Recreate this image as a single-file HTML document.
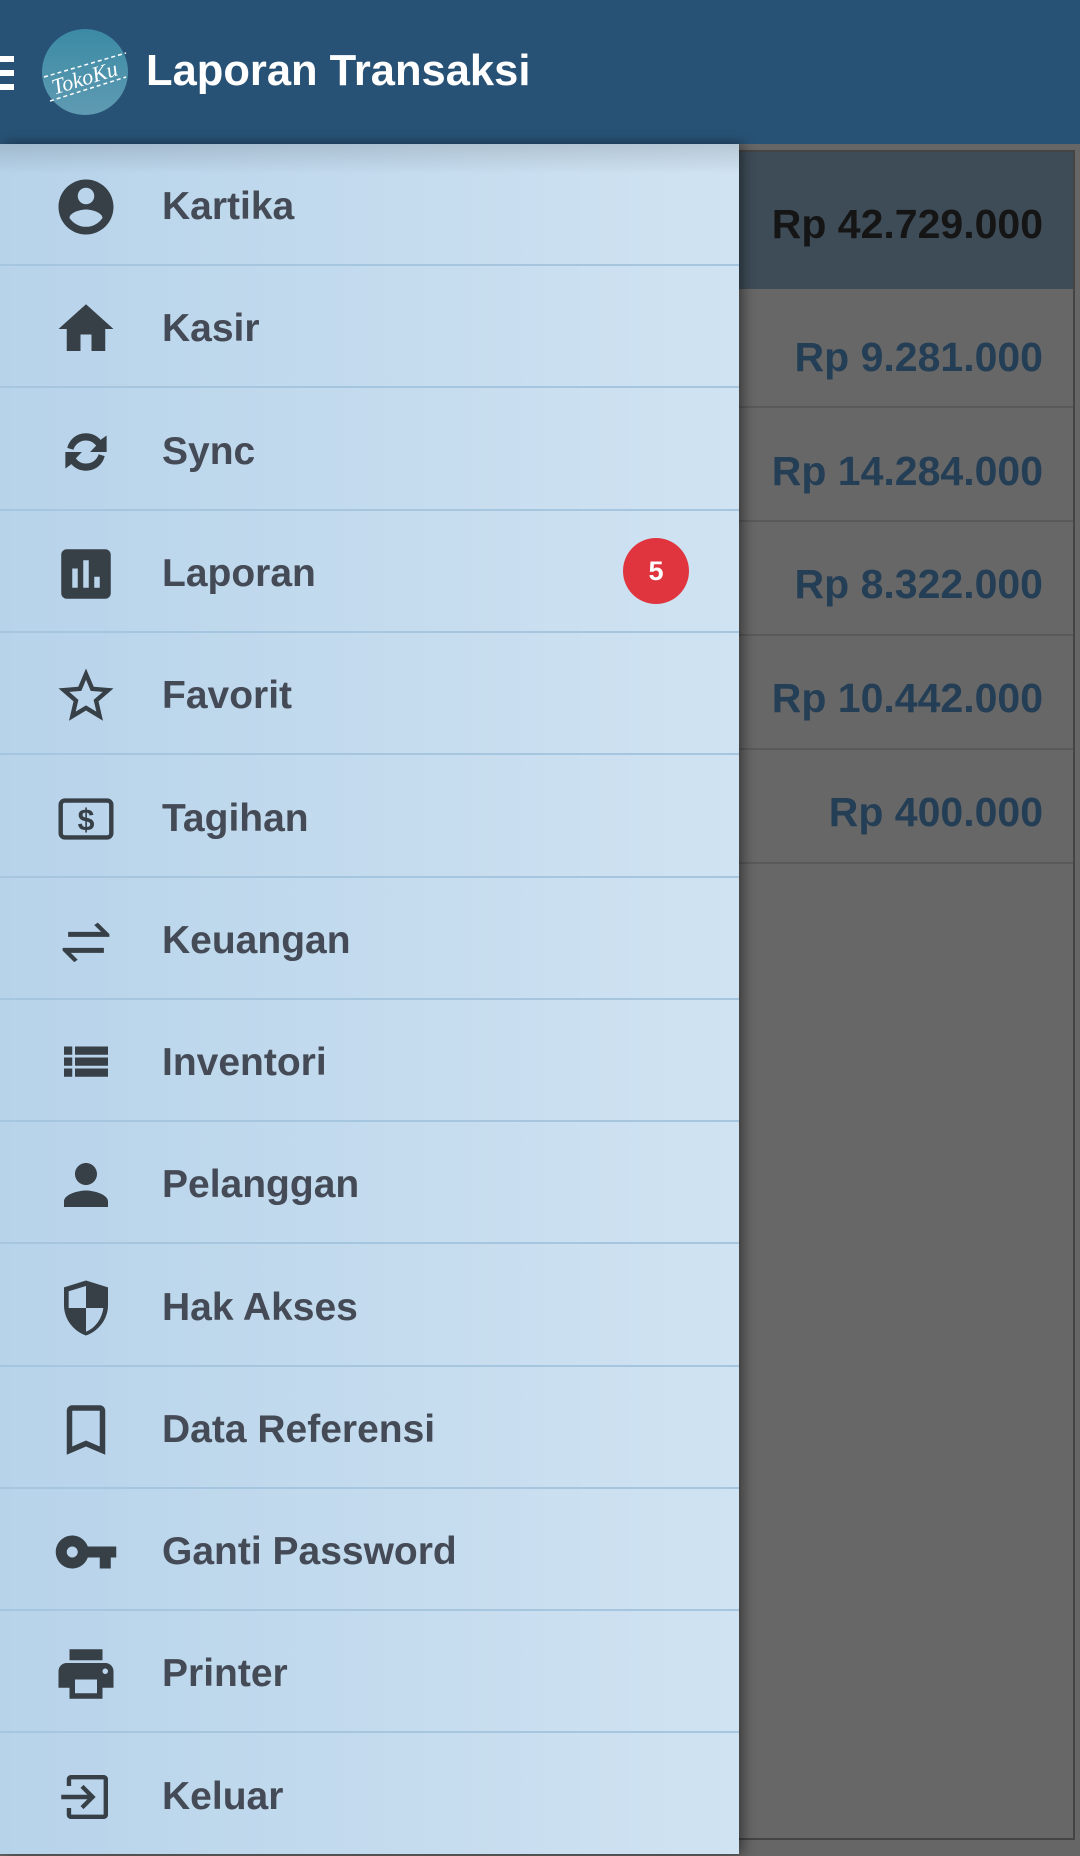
<!DOCTYPE html>
<html><head><meta charset="utf-8"><style>
*{margin:0;padding:0;box-sizing:border-box}
body{width:1080px;height:1845px;overflow:hidden;position:relative;background:#666;font-family:"Liberation Sans",sans-serif}
.hdr{position:absolute;left:0;top:0;width:1080px;height:144px;background:#285275}
.ttl{position:absolute;left:146px;top:47px;color:#fff;font-weight:bold;font-size:43.5px}
.panel{position:absolute;left:700px;top:150px;width:375px;height:1690px;border:2px solid #444;background:#676767}
.top{position:absolute;left:0;top:0;width:100%;height:137px;background:#3e4c58}
.amt{position:absolute;right:30px;font-weight:bold;font-size:41px;color:#243e56}
.line{position:absolute;left:0;width:100%;height:2px;background:#5a5a5a}
.drawer{position:absolute;left:0;top:144px;width:739px;height:1710px;background:linear-gradient(90deg,#b7d3ea,#d0e3f2);box-shadow:4px 0 12px rgba(0,0,0,.45)}
.drawer:before{content:"";position:absolute;left:0;top:0;width:100%;height:30px;background:linear-gradient(rgba(0,0,0,.12),rgba(0,0,0,0))}
.row{position:absolute;left:0;width:739px;height:122px;border-bottom:2px solid #a6c6e0}
.row svg{position:absolute;left:53px;top:30px;width:66px;height:66px;fill:#373f47}
.row span{position:absolute;left:162px;top:41px;font-size:39px;font-weight:bold;color:#454b56}
.badge{position:absolute;left:623px;top:27px;width:66px;height:66px;border-radius:50%;background:#e0353f;color:#fff;font-weight:bold;font-size:27px;text-align:center;line-height:66px}
</style></head><body>
<div class="panel">
 <div class="top"></div>
 <div class="amt" style="top:49px;color:#151515">Rp 42.729.000</div>
 <div class="amt" style="top:182px">Rp 9.281.000</div>
 <div class="line" style="top:254px"></div>
 <div class="amt" style="top:296px">Rp 14.284.000</div>
 <div class="line" style="top:368px"></div>
 <div class="amt" style="top:409px">Rp 8.322.000</div>
 <div class="line" style="top:482px"></div>
 <div class="amt" style="top:523px">Rp 10.442.000</div>
 <div class="line" style="top:596px"></div>
 <div class="amt" style="top:637px">Rp 400.000</div>
 <div class="line" style="top:710px"></div>
</div>
<div class="hdr">
 <div style="position:absolute;left:0;top:56px;width:14px;height:6px;background:#fff"></div>
 <div style="position:absolute;left:0;top:70px;width:14px;height:6px;background:#fff"></div>
 <div style="position:absolute;left:0;top:84px;width:14px;height:6px;background:#fff"></div>
 <svg style="position:absolute;left:42px;top:29px" width="86" height="86" viewBox="0 0 86 86">
  <defs><linearGradient id="g" x1="0" y1="0" x2="0" y2="1"><stop offset="0" stop-color="#3b8aa5"/><stop offset="1" stop-color="#5f9bb2"/></linearGradient></defs>
  <circle cx="43" cy="43" r="43" fill="url(#g)"/>
  <line x1="2" y1="48" x2="84" y2="24" stroke="#fff" stroke-width="1.5" stroke-dasharray="4 3"/>
  <line x1="8" y1="72" x2="84" y2="48" stroke="#fff" stroke-width="1.5" stroke-dasharray="4 3"/>
  <text x="43" y="56" transform="rotate(-17 43 50)" text-anchor="middle" fill="#fff" font-family="Liberation Serif,serif" font-style="italic" font-size="22">TokoKu</text>
 </svg>
 <div class="ttl">Laporan Transaksi</div>
</div>
<div class="drawer">
 <div class="row" style="top:0"><svg viewBox="0 0 24 24"><path d="M12 2C6.48 2 2 6.48 2 12s4.48 10 10 10 10-4.48 10-10S17.52 2 12 2zm0 3c1.66 0 3 1.34 3 3s-1.34 3-3 3-3-1.34-3-3 1.34-3 3-3zm0 14.2c-2.5 0-4.71-1.28-6-3.220.03-1.99 4-3.08 6-3.08 1.99 0 5.970 1.09 6 3.08-1.29 1.94-3.5 3.22-6 3.22z"/></svg><span>Kartika</span></div>
 <div class="row" style="top:122px"><svg viewBox="0 0 24 24"><path d="M10 20v-6h4v6h5v-8h3L12 3 2 12h3v8z"/></svg><span>Kasir</span></div>
 <div class="row" style="top:245px"><svg viewBox="0 0 24 24"><path d="M5.2 10.5C6 7.3 8.7 5.2 12 5.2c2.2 0 4 .9 5.3 2.4L19.5 6v6h-6l2.2-2.3C14.8 8.5 13.5 7.8 12 7.8c-2.2 0-4 1.4-4.6 3.4zM18.8 13.5c-.8 3.2-3.5 5.3-6.8 5.3-2.2 0-4-.9-5.3-2.4L4.5 18v-6h6l-2.2 2.3c.9 1.2 2.2 1.9 3.7 1.9 2.2 0 4-1.4 4.6-3.4z"/></svg><span>Sync</span></div>
 <div class="row" style="top:367px"><svg viewBox="0 0 24 24"><path d="M19 3H5c-1.1 0-2 .9-2 2v14c0 1.1.9 2 2 2h14c1.1 0 2-.9 2-2V5c0-1.1-.9-2-2-2zM9 17H7v-7h2v7zm4 0h-2V7h2v10zm4 0h-2v-4h2v4z"/></svg><span>Laporan</span><div class="badge">5</div></div>
 <div class="row" style="top:489px"><svg viewBox="0 0 24 24"><path d="M22 9.24l-7.19-.62L12 2 9.19 8.63 2 9.24l5.46 4.73L5.82 21 12 17.27 18.18 21l-1.63-7.03L22 9.24zM12 15.4l-3.76 2.27 1-4.28-3.32-2.88 4.38-.38L12 6.1l1.71 4.04 4.38.38-3.32 2.88 1 4.28L12 15.4z"/></svg><span>Favorit</span></div>
 <div class="row" style="top:612px"><svg viewBox="0 0 24 24"><rect x="2.8" y="5.3" width="18.4" height="13.4" rx="1.5" fill="none" stroke="#373f47" stroke-width="1.6"/><text x="12" y="16" text-anchor="middle" font-family="Liberation Sans" font-weight="bold" font-size="11" fill="#373f47">$</text></svg><span>Tagihan</span></div>
 <div class="row" style="top:734px"><svg viewBox="0 0 24 24"><path d="M3.5 14.5h15v1.8h-12l2.5 2.5-1.3.9L3.5 15.5zM20.5 10.5h-15V8.7h12L15 6.2l1.3-.9 4.2 4.2z"/></svg><span>Keuangan</span></div>
 <div class="row" style="top:856px"><svg viewBox="0 0 24 24"><path d="M4 5h3v3H4zM8 5h12v3H8zM4 9h3v3H4zM8 9h12v3H8zM4 13h3v3H4zM8 13h12v3H8z" transform="translate(0,1)"/></svg><span>Inventori</span></div>
 <div class="row" style="top:978px"><svg viewBox="0 0 24 24"><path d="M12 12c2.21 0 4-1.79 4-4s-1.79-4-4-4-4 1.79-4 4 1.79 4 4 4zm0 2c-2.67 0-8 1.34-8 4v2h16v-2c0-2.66-5.33-4-8-4z"/></svg><span>Pelanggan</span></div>
 <div class="row" style="top:1101px"><svg viewBox="0 0 24 24"><path d="M12 2L4 4.5V11c0 5 3.4 9.4 8 11 4.6-1.6 8-6 8-11V4.5L12 2zm0 10h6.3c-.5 3.9-3 7.4-6.3 8.6V12H5.7V5.9L12 4v8z"/></svg><span>Hak Akses</span></div>
 <div class="row" style="top:1223px"><svg viewBox="0 0 24 24"><path d="M17 3H7c-1.1 0-1.99.9-1.99 2L5 21l7-3 7 3V5c0-1.1-.9-2-2-2zm0 15l-5-2.18L7 18V5h10v13z"/></svg><span>Data Referensi</span></div>
 <div class="row" style="top:1345px"><svg viewBox="0 0 24 24"><path d="M12.65 10C11.830 7.67 9.61 6 7 6c-3.31 0-6 2.69-6 6s2.69 6 6 6c2.61 0 4.83-1.67 5.65-4H17v4h4v-4h2v-4H12.65zM7 14c-1.1 0-2-.9-2-2s.9-2 2-2 2 .9 2 2-.9 2-2 2z"/></svg><span>Ganti Password</span></div>
 <div class="row" style="top:1467px"><svg viewBox="0 0 24 24"><path d="M19 8H5c-1.66 0-3 1.34-3 3v6h4v4h12v-4h4v-6c0-1.66-1.34-3-3-3zm-3 11H8v-5h8v5zm3-7c-.55 0-1-.45-1-1s.45-1 1-1 1 .45 1 1-.45 1-1 1zm-1-9H6v4h12V3z"/></svg><span>Printer</span></div>
 <div class="row" style="top:1590px;border-bottom:none"><svg viewBox="0 0 24 24"><path d="M5 8V5.5C5 4.7 5.7 4 6.5 4h12c.8 0 1.5.7 1.5 1.5v13c0 .8-.7 1.5-1.5 1.5h-12C5.7 20 5 19.3 5 18.5V16h1.6v2.4h11.8V5.6H6.6V8z"/><path d="M3 11.2h9.5L10 8.7l1.1-1.1L15.5 12l-4.4 4.4-1.1-1.1 2.5-2.5H3z"/></svg><span>Keluar</span></div>
</div>
</body></html>
